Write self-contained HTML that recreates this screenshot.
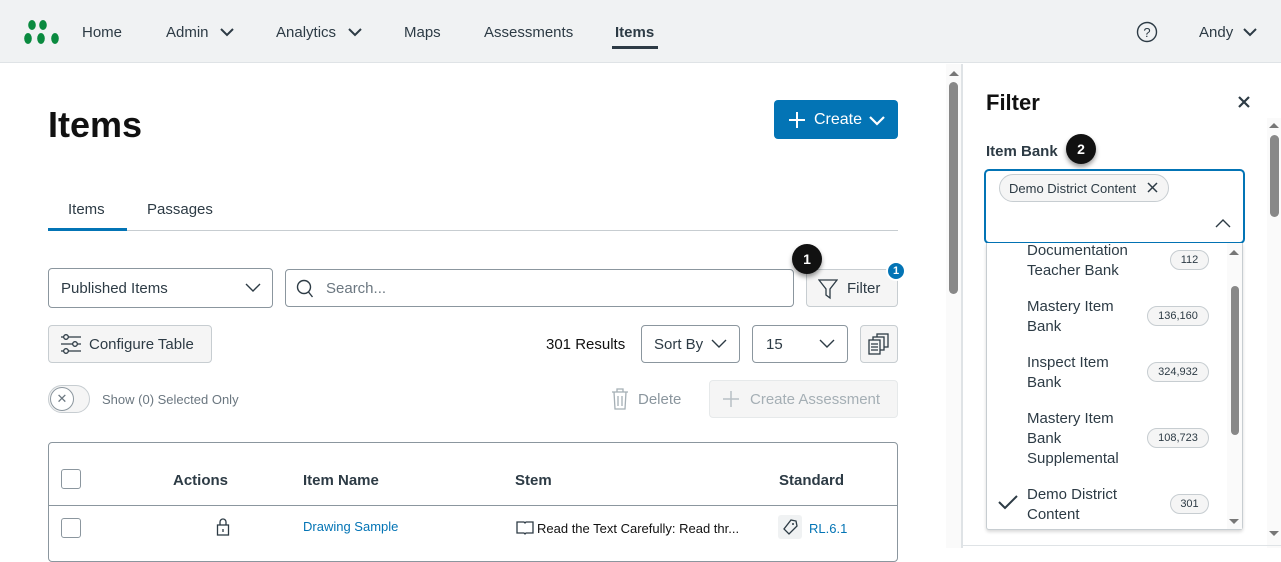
<!DOCTYPE html>
<html><head><style>
*{box-sizing:border-box;margin:0;padding:0}
body{width:1281px;height:548px;overflow:hidden;background:#fff;font-family:"Liberation Sans",sans-serif;color:#2d3b45;position:relative}
.a{position:absolute}
.nav{left:0;top:0;width:1281px;height:63px;background:#f0f2f3;border-bottom:1px solid #dfe3e6}
.nav span{position:absolute;top:24px;font-size:15px;color:#2d3b45}
.btn{border:1px solid #c7cdd1;border-radius:4px;background:#f5f5f5}
.inp{border:1px solid #8b969e;border-radius:4px;background:#fff}
.pill{border:1px solid #c7cdd1;border-radius:10px;background:#f5f5f5;font-size:11px;text-align:center;line-height:18px;height:20px}
.opt{position:absolute;left:1027px;font-size:15px;line-height:20px;color:#2d3b45}
.badge{width:30px;height:30px;border-radius:50%;background:#111;color:#fff;font-weight:bold;font-size:14px;text-align:center;line-height:30px;box-shadow:0 3px 5px rgba(0,0,0,.4)}
</style></head><body>
<div class="a nav">
 <svg class="a" style="left:23px;top:19px" width="38" height="26" viewBox="0 0 38 26"><g fill="#0a8a3f"><ellipse cx="9" cy="6" rx="3.8" ry="5"/><ellipse cx="20" cy="6" rx="3.8" ry="5"/><ellipse cx="5" cy="19.5" rx="3.8" ry="5.5"/><ellipse cx="18" cy="19.5" rx="3.8" ry="5.5"/><ellipse cx="32" cy="19.5" rx="3.8" ry="5.5"/></g></svg>
 <span style="left:82px">Home</span>
 <span style="left:166px">Admin</span><svg class="a" style="left:220px;top:28px" width="14" height="9"><path d="M1 1l6 6 6-6" stroke="#2d3b45" stroke-width="2" fill="none"/></svg>
 <span style="left:276px">Analytics</span><svg class="a" style="left:348px;top:28px" width="14" height="9"><path d="M1 1l6 6 6-6" stroke="#2d3b45" stroke-width="2" fill="none"/></svg>
 <span style="left:404px">Maps</span>
 <span style="left:484px">Assessments</span>
 <span style="left:615px;font-weight:bold">Items</span>
 <div class="a" style="left:612px;top:46px;width:46px;height:3px;background:#2d3b45"></div>
 <svg class="a" style="left:1136px;top:21px" width="22" height="22"><circle cx="11" cy="11" r="9.5" stroke="#2d3b45" stroke-width="1.4" fill="none"/><text x="11" y="16" text-anchor="middle" font-size="13" font-family="Liberation Sans" fill="#2d3b45">?</text></svg>
 <span style="left:1199px">Andy</span><svg class="a" style="left:1243px;top:28px" width="14" height="9"><path d="M1 1l6 6 6-6" stroke="#2d3b45" stroke-width="2" fill="none"/></svg>
</div>

<div class="a" style="left:48px;top:104px;font-size:36px;font-weight:bold;color:#111">Items</div>
<div class="a" style="left:774px;top:100px;width:124px;height:39px;background:#0374b5;border-radius:4px;color:#fff;font-size:16px;line-height:39px;padding-left:40px">Create</div>
<svg class="a" style="left:788px;top:111px" width="18" height="18"><path d="M9 1v16M1 9h16" stroke="#fff" stroke-width="2"/></svg>
<svg class="a" style="left:868px;top:115px" width="18" height="11"><path d="M2 2l7 7 7-7" stroke="#fff" stroke-width="2.2" fill="none"/></svg>

<div class="a" style="left:68px;top:201px;font-size:15px">Items</div>
<div class="a" style="left:147px;top:201px;font-size:15px">Passages</div>
<div class="a" style="left:48px;top:230px;width:850px;height:1px;background:#c7cdd1"></div>
<div class="a" style="left:48px;top:228px;width:79px;height:3px;background:#0374b5"></div>

<div class="a inp" style="left:48px;top:268px;width:225px;height:40px;font-size:15px;line-height:40px;padding-left:12px">Published Items</div>
<svg class="a" style="left:245px;top:283px" width="16" height="10"><path d="M1 1l7 7 7-7" stroke="#2d3b45" stroke-width="1.4" fill="none"/></svg>
<div class="a inp" style="left:285px;top:269px;width:509px;height:38px;font-size:15px;line-height:38px;padding-left:40px;color:#6b7780">Search...</div>
<svg class="a" style="left:296px;top:279px" width="18" height="20"><circle cx="8" cy="8" r="6.5" stroke="#2d3b45" stroke-width="1.4" fill="none"/><path d="M12.5 13l4 5" stroke="#2d3b45" stroke-width="1.4"/></svg>
<div class="a btn" style="left:806px;top:269px;width:92px;height:38px;font-size:15px;line-height:38px;padding-left:40px">Filter</div>
<svg class="a" style="left:818px;top:278px" width="20" height="22"><path d="M1 2h18l-7 9v9l-4-3v-6z" stroke="#2d3b45" stroke-width="1.3" fill="none"/></svg>
<div class="a" style="left:886px;top:261px;width:20px;height:20px;border-radius:50%;background:#0374b5;color:#fff;font-size:11px;font-weight:bold;text-align:center;line-height:16px;border:2px solid #fff">1</div>
<div class="a badge" style="left:792px;top:244px">1</div>

<div class="a btn" style="left:48px;top:325px;width:164px;height:38px;font-size:15px;line-height:38px;padding-left:40px">Configure Table</div>
<svg class="a" style="left:60px;top:334px" width="22" height="20"><g stroke="#2d3b45" stroke-width="1.3" fill="#f5f5f5"><path d="M1 3h20M1 10h20M1 17h20"/><circle cx="6" cy="3" r="2.3"/><circle cx="15" cy="10" r="2.3"/><circle cx="6" cy="17" r="2.3"/></g></svg>
<div class="a" style="left:546px;top:336px;font-size:15px;color:#111">301 Results</div>
<div class="a inp" style="left:641px;top:325px;width:99px;height:38px;font-size:15px;line-height:38px;padding-left:12px">Sort By</div>
<svg class="a" style="left:711px;top:339px" width="16" height="10"><path d="M1 1l7 7 7-7" stroke="#2d3b45" stroke-width="1.4" fill="none"/></svg>
<div class="a inp" style="left:752px;top:325px;width:96px;height:38px;font-size:15px;line-height:38px;padding-left:13px">15</div>
<svg class="a" style="left:819px;top:339px" width="16" height="10"><path d="M1 1l7 7 7-7" stroke="#2d3b45" stroke-width="1.4" fill="none"/></svg>
<div class="a btn" style="left:860px;top:325px;width:38px;height:38px"></div>
<svg class="a" style="left:868px;top:333px" width="22" height="22"><g stroke="#2d3b45" stroke-width="1.3" fill="#f5f5f5"><rect x="9" y="1" width="11" height="13"/><rect x="5" y="4" width="11" height="13"/><rect x="1" y="7" width="11" height="14"/><path d="M3 11h7M3 14h7M3 17h7"/></g></svg>

<div class="a" style="left:48px;top:385px;width:42px;height:28px;border-radius:14px;border:1px solid #c7cdd1;background:#f5f5f5"></div>
<div class="a" style="left:50px;top:387px;width:24px;height:24px;border-radius:50%;border:1px solid #8b969e;background:#fff;text-align:center;line-height:22px;font-size:13px;color:#6b7780">✕</div>
<div class="a" style="left:102px;top:392px;font-size:13px;color:#6b7780">Show (0) Selected Only</div>
<svg class="a" style="left:610px;top:388px" width="20" height="22"><g stroke="#a5afb5" stroke-width="1.3" fill="none"><path d="M2 4h16M7 4V1h6v3M4 4l1 17h10l1-17M8 8v10M12 8v10"/></g></svg>
<div class="a" style="left:638px;top:391px;font-size:15px;color:#8b969e">Delete</div>
<div class="a" style="left:709px;top:380px;width:189px;height:38px;border:1px solid #e6e9ea;border-radius:4px;background:#f5f5f5;font-size:15px;line-height:38px;padding-left:40px;color:#a5afb5">Create Assessment</div>
<svg class="a" style="left:722px;top:390px" width="18" height="18"><path d="M9 1v16M1 9h16" stroke="#b8c0c5" stroke-width="1.5"/></svg>

<div class="a" style="left:48px;top:442px;width:850px;height:120px;border:1px solid #8b969e;border-radius:4px"></div>
<div class="a" style="left:48px;top:505px;width:850px;height:1px;background:#8b969e"></div>
<div class="a" style="left:61px;top:469px;width:20px;height:20px;border:1px solid #8b969e;border-radius:3px"></div>
<div class="a" style="left:61px;top:518px;width:20px;height:20px;border:1px solid #8b969e;border-radius:3px"></div>
<div class="a" style="left:173px;top:472px;font-size:15px;font-weight:bold">Actions</div>
<div class="a" style="left:303px;top:472px;font-size:15px;font-weight:bold">Item Name</div>
<div class="a" style="left:515px;top:472px;font-size:15px;font-weight:bold">Stem</div>
<div class="a" style="left:779px;top:472px;font-size:15px;font-weight:bold">Standard</div>
<svg class="a" style="left:216px;top:518px" width="14" height="18"><g stroke="#2d3b45" stroke-width="1.3" fill="none"><rect x="1.5" y="7" width="11" height="10"/><path d="M4 7V4a3 3 0 016 0v3M7 11v3"/></g></svg>
<div class="a" style="left:303px;top:519px;font-size:13px;color:#0374b5">Drawing Sample</div>
<svg class="a" style="left:516px;top:521px" width="18" height="14"><path d="M1 1h7l1 1 1-1h7v11h-7l-1 1-1-1H1z" stroke="#2d3b45" stroke-width="1.3" fill="none"/></svg>
<div class="a" style="left:537px;top:521px;font-size:13px;color:#111">Read the Text Carefully: Read thr...</div>
<div class="a" style="left:778px;top:515px;width:24px;height:24px;background:#f0f2f3;border-radius:3px"></div>
<svg class="a" style="left:782px;top:518px" width="16" height="18"><path d="M9 2l5 1 1 5-8 8-5-5z" stroke="#2d3b45" stroke-width="1.3" fill="none"/><circle cx="11" cy="6" r="1" fill="#2d3b45"/></svg>
<div class="a" style="left:809px;top:521px;font-size:13px;color:#0374b5">RL.6.1</div>

<div class="a" style="left:946px;top:64px;width:15px;height:484px;background:#fafafa"></div>
<svg class="a" style="left:948px;top:69px" width="12" height="8"><path d="M1 7l5-5 5 5z" fill="#777"/></svg>
<div class="a" style="left:949px;top:82px;width:9px;height:212px;border-radius:5px;background:#888"></div>
<div class="a" style="left:961px;top:64px;width:2px;height:484px;background:#dfe3e6"></div>

<div class="a" style="left:986px;top:90px;font-size:22px;font-weight:bold;color:#111">Filter</div>
<svg class="a" style="left:1238px;top:96px" width="12" height="12"><path d="M1 1l10 10M11 1L1 11" stroke="#2d3b45" stroke-width="2.2"/></svg>
<div class="a" style="left:1267px;top:118px;width:14px;height:430px;background:#fafafa"></div>
<svg class="a" style="left:1268px;top:121px" width="12" height="8"><path d="M1 7l5-5 5 5z" fill="#777"/></svg>
<svg class="a" style="left:1268px;top:530px" width="12" height="8"><path d="M1 1l5 5 5-5z" fill="#777"/></svg>
<div class="a" style="left:1270px;top:135px;width:9px;height:82px;border-radius:5px;background:#888"></div>
<div class="a" style="left:986px;top:143px;font-size:15px;font-weight:bold">Item Bank</div>
<div class="a badge" style="left:1066px;top:134px">2</div>
<div class="a" style="left:984px;top:169px;width:261px;height:75px;border:2px solid #0374b5;border-radius:5px;background:#fff"></div>
<div class="a" style="left:999px;top:174px;width:170px;height:28px;border:1px solid #c7cdd1;border-radius:14px;background:#f5f5f5;font-size:13px;line-height:27px;padding-left:9px">Demo District Content</div>
<svg class="a" style="left:1147px;top:182px" width="12" height="12"><path d="M1 1l9 9M10 1L1 10" stroke="#2d3b45" stroke-width="1.5"/></svg>
<svg class="a" style="left:1215px;top:218px" width="16" height="10"><path d="M1 9l7-7 7 7" stroke="#2d3b45" stroke-width="1.4" fill="none"/></svg>

<div class="a" style="left:986px;top:243px;width:257px;height:287px;border:1px solid #c7cdd1;border-top:none;border-radius:0 0 3px 3px;background:#fff;box-shadow:0 2px 3px rgba(0,0,0,.15);overflow:hidden"></div>
<div class="a" style="left:1227px;top:243px;width:15px;height:286px;background:#fafafa"></div>
<svg class="a" style="left:1229px;top:249px" width="10" height="7"><path d="M0 6l5-5 5 5z" fill="#777"/></svg>
<svg class="a" style="left:1229px;top:518px" width="10" height="7"><path d="M0 1l5 5 5-5z" fill="#777"/></svg>
<div class="a" style="left:1231px;top:286px;width:8px;height:149px;border-radius:4px;background:#888"></div>
<div class="opt" style="top:241px">Documentation<br>Teacher Bank</div>
<div class="a pill" style="left:1170px;top:250px;width:39px">112</div>
<div class="opt" style="top:297px">Mastery Item<br>Bank</div>
<div class="a pill" style="left:1147px;top:306px;width:62px">136,160</div>
<div class="opt" style="top:353px">Inspect Item<br>Bank</div>
<div class="a pill" style="left:1147px;top:362px;width:62px">324,932</div>
<div class="opt" style="top:409px">Mastery Item<br>Bank<br>Supplemental</div>
<div class="a pill" style="left:1147px;top:428px;width:62px">108,723</div>
<svg class="a" style="left:998px;top:494px" width="20" height="16"><path d="M1 8l6 6 12-12" stroke="#2d3b45" stroke-width="2" fill="none"/></svg>
<div class="opt" style="top:485px">Demo District<br>Content</div>
<div class="a pill" style="left:1170px;top:494px;width:39px">301</div>
<div class="a" style="left:963px;top:545px;width:318px;height:1px;background:#dfe3e6"></div>
</body></html>
